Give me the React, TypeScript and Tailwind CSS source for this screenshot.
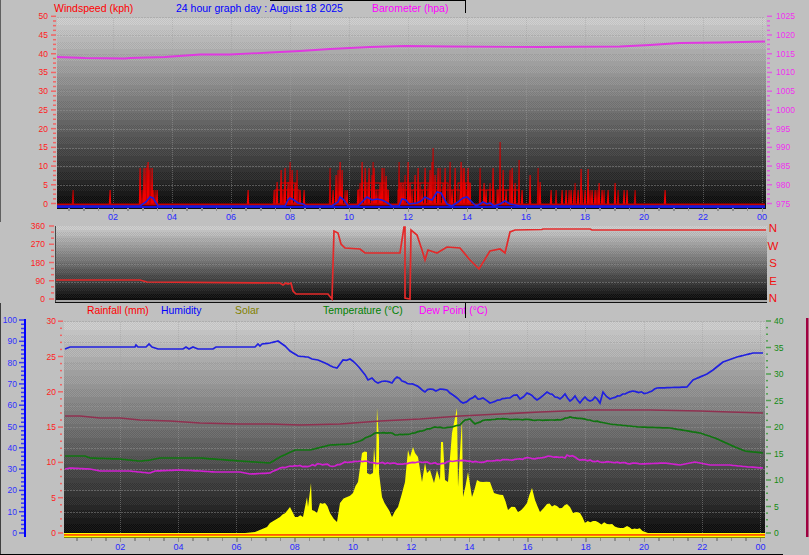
const font = { fontFamily: '"Liberation Sans", Arial, sans-serif' };

type Pt = [number, number];
const pts = (a: Pt[]) => a.map((p) => p.join(',')).join(' ');

// adds small pixel noise between the hand read points, the source data is jittery
const rough = (a: Pt[], from: number, to: number, amp: number): Pt[] => {
  const out: Pt[] = [];
  a.forEach((p, i) => {
    out.push(p);
    const next = a[i + 1];
    if (!next || next[0] - p[0] < 3) return;
    const n = Math.floor((next[0] - p[0]) / 2.5);
    for (let k = 1; k < n; k++) {
      const x = p[0] + ((next[0] - p[0]) * k) / n;
      const y = p[1] + ((next[1] - p[1]) * k) / n;
      const r = Math.sin(x * 12.9898) * 43758.5453;
      const noise = (r - Math.floor(r) - 0.5) * 2 * amp;
      out.push([+x.toFixed(1), +(x >= from && x <= to ? y + noise : y).toFixed(1)]);
    }
  });
  return out;
};

const barometer: Pt[] = [[57,57],[85,58],[125,58.5],[130,58],[165,57],[200,54.5],[230,54.5],[270,52.5],[300,51],[330,49],[370,47],[405,46],[450,46.5],[540,47],[620,46.5],[650,45],[680,43],[720,42.5],[765,41.5]];

const gusts: Pt[] = [[57,206],[140,206],[146,202],[150,197],[153,198],[158,206],[285,206],[288,200],[290,198],[294,200],[298,203],[303,204],[306,206],[332,206],[338,202],[340,197],[344,200],[348,206],[358,206],[363,201],[367,197],[372,200],[377,199],[382,200],[386,202],[392,206],[399,206],[402,199],[406,200],[409,204],[417,203],[421,201],[425,197],[429,199],[432,200],[437,192],[441,193],[447,204],[452,206],[458,202],[463,198],[467,197],[471,201],[476,206],[480,204],[483,202],[487,204],[490,203],[494,206],[500,204],[505,201],[510,204],[520,206],[765,206]];

const spikes: Pt[] = [[73,190],[110,190],[140,168],[142,190],[144,168],[146,168],[147,165],[148,162],[149,170],[150,168],[152,168],[153,190],[155,190],[157,190],[248,190],[274,190],[277,182],[281,170],[283,190],[285,168],[288,182],[290,162],[292,170],[295,183],[297,170],[300,190],[304,190],[330,168],[333,190],[336,175],[338,170],[340,162],[342,170],[345,190],[347,190],[358,190],[360,183],[362,162],[365,168],[367,183],[369,168],[372,175],[373,162],[374,168],[376,190],[378,190],[380,183],[382,168],[384,168],[386,176],[388,190],[399,162],[401,183],[403,183],[405,175],[408,162],[410,183],[412,190],[415,175],[418,168],[420,183],[422,190],[425,168],[428,183],[430,170],[432,162],[433,148],[435,175],[438,168],[440,168],[443,183],[445,168],[450,162],[452,190],[455,168],[460,190],[461,162],[462,183],[463,168],[464,168],[465,183],[466,190],[468,168],[470,183],[480,168],[484,183],[486,190],[490,183],[493,168],[498,190],[500,142],[503,170],[506,190],[510,170],[512,168],[515,183],[519,160],[522,190],[530,175],[538,168],[540,182],[551,190],[556,190],[562,190],[566,190],[569,190],[571,190],[574,190],[575,183],[578,190],[581,169],[582,190],[585,190],[588,169],[590,190],[592,190],[595,190],[597,190],[599,183],[602,190],[604,190],[608,190],[615,183],[618,190],[624,190],[627,190],[635,190],[665,190]];

const blocks: number[][] = [[275,299,190],[281,296,183],[358,388,190],[362,386,183],[398,470,190],[400,448,183],[458,470,183],[480,494,190],[497,519,190]];

const direction: Pt[] = [[56,280],[140,280],[147,282],[280,283],[283,285],[286,283],[288,284],[291,283],[293,291],[296,294],[328,294],[332,299],[334,231],[338,233],[341,244],[345,248],[360,249],[365,253],[400,253],[402,240],[404,227],[405,227],[405,298],[410,299],[411,230],[417,235],[422,250],[425,260],[428,250],[437,253],[447,247],[460,248],[470,260],[479,269],[490,251],[500,249],[505,253],[510,232],[515,230],[542,229.5],[543,229],[590,229],[592,230],[766,230]];

const humidity: Pt[] = [[65,349],[70,347],[135,347],[136,345],[138,347],[146,347],[149,344],[152,347],[158,349],[183,349],[186,347],[189,349],[193,347],[198,349],[213,349],[216,347],[255,347],[258,344],[260,346],[262,344],[270,343],[278,341],[285,346],[290,351],[298,356],[308,357],[312,359],[318,360],[325,363],[333,367],[337,368],[343,360],[350,359],[356,364],[362,371],[368,380],[372,378],[378,383],[385,381],[392,383],[397,377],[402,381],[410,384],[415,385],[420,388],[425,392],[430,389],[436,391],[440,389],[447,390],[453,395],[463,403],[470,399],[475,396],[478,399],[483,398],[490,403],[500,400],[510,398],[517,395],[520,399],[527,393],[537,400],[540,398],[547,392],[555,397],[560,399],[565,394],[570,401],[575,396],[580,403],[585,397],[590,401],[595,397],[600,403],[603,392],[610,399],[620,396],[633,391],[647,393],[657,388],[687,387],[693,380],[707,374],[713,370],[723,362],[737,357],[753,353],[763,353]];

const maroon: Pt[] = [[65,416],[80,416],[100,418],[120,418],[140,420],[170,421],[200,423],[240,424],[270,424],[300,425],[340,424],[380,421],[420,419],[460,416],[500,414],[540,412],[590,410],[650,410],[700,411],[730,412],[763,413]];

const temperature: Pt[] = [[65,456],[85,456],[90,458],[120,459],[140,461],[150,460],[160,458],[200,458],[240,461],[270,463],[280,457],[295,450],[310,450],[330,445],[350,444],[360,441],[375,433],[392,433],[395,435],[410,434],[425,430],[435,427],[445,428],[460,425],[465,420],[470,419],[475,424],[485,420],[500,419],[540,420],[560,420],[570,417],[590,420],[610,424],[640,427],[670,428],[700,433],[715,438],[735,447],[745,451],[763,453]];

const dewPoint: Pt[] = [[65,469],[70,468],[90,469],[100,471],[130,471],[140,472],[150,473],[155,471],[180,470],[200,471],[215,472],[240,472],[250,474],[270,473],[280,468],[290,466],[310,466],[320,464],[335,466],[345,462],[365,461],[380,463],[400,464],[420,462],[440,464],[450,461],[470,461],[478,462],[490,461],[510,460],[530,458],[540,458],[548,456],[565,458],[567,455],[575,457],[580,460],[590,460],[600,462],[620,463],[640,464],[665,463],[680,465],[695,462],[710,465],[730,465],[750,467],[763,468]];

const solar: Pt[] = [[235,534],[245,533],[255,532],[267,527],[270,523],[280,517],[290,507],[293,513],[295,517],[303,517],[307,497],[308,507],[311,483],[312,510],[317,513],[320,503],[325,503],[330,513],[337,522],[340,503],[347,497],[353,493],[358,482],[362,453],[367,452],[367,473],[373,473],[374,447],[376,470],[377,408],[379,440],[379,473],[382,497],[387,507],[392,517],[398,507],[405,482],[408,450],[410,457],[413,447],[415,453],[418,457],[422,482],[425,463],[427,473],[430,470],[434,483],[437,470],[440,480],[441,442],[443,442],[445,480],[448,482],[452,433],[454,423],[457,408],[458,487],[462,418],[463,497],[468,472],[472,497],[477,480],[483,482],[490,482],[494,493],[503,495],[508,510],[515,507],[518,512],[527,503],[532,488],[535,500],[540,512],[547,504],[557,506],[562,508],[567,504],[573,513],[580,513],[585,523],[593,521],[607,524],[620,528],[627,526],[637,529],[648,533],[655,534]];

const gray = (v: number) => {
  const c = Math.max(0, Math.min(255, Math.round(v)));
  return `rgb(${c},${c},${c})`;
};

function Plot({ id, x, y, w, h, bands }: { id: string; x: number; y: number; w: number; h: number; bands: number }) {
  const bh = h / bands;
  const level = (t: number) => 194 * Math.pow(1 - t, 0.95) + 6;
  return (
    <g>
      <defs>
        {Array.from({ length: bands }, (_, i) => (
          <pattern key={i} id={`${id}${i}`} width="2" height="2" patternUnits="userSpaceOnUse" x={x} y={y}>
            <rect width="1" height="1" fill={gray(level(i / bands) + 8)} />
            <rect x="1" y="1" width="1" height="1" fill={gray(level(i / bands) + 8)} />
          </pattern>
        ))}
      </defs>
      {Array.from({ length: bands }, (_, i) => (
        <g key={i}>
          <rect x={x} y={y + i * bh} width={w} height={bh + 0.5} fill={gray(level((i + 0.5) / bands))} shapeRendering="crispEdges" />
          <rect x={x} y={y + i * bh} width={w} height={bh * 0.6} fill={`url(#${id}${i})`} shapeRendering="crispEdges" />
        </g>
      ))}
    </g>
  );
}

function Hours({ x0, step, top, bottom, labelY }: { x0: number; step: number; top: number; bottom: number; labelY?: number }) {
  const labels = ['02', '04', '06', '08', '10', '12', '14', '16', '18', '20', '22', '00'];
  return (
    <g>
      {labels.map((l, i) => {
        const x = x0 + step * (i + 1);
        return (
          <g key={l}>
            <line x1={x} x2={x} y1={top} y2={bottom} stroke="#a0a0a0" strokeOpacity="0.45" strokeDasharray="1 1" shapeRendering="crispEdges" />
            {labelY && (
              <text x={x} y={labelY} textAnchor="middle" fontSize="9" fill="#2828ff">
                {l}
              </text>
            )}
          </g>
        );
      })}
    </g>
  );
}

function BottomTicks({ x0, step, y }: { x0: number; step: number; y: number }) {
  return (
    <g>
      {Array.from({ length: 48 }, (_, i) => (
        <rect key={i} x={x0 + (step * (i + 1)) / 2 - 0.5} y={y} width="1.5" height={(i + 1) % 4 === 0 ? 4 : 3} fill="#8f8f8f" shapeRendering="crispEdges" />
      ))}
    </g>
  );
}

function HGrid({ x1, x2, ys }: { x1: number; x2: number; ys: number[] }) {
  return (
    <g>
      {ys.map((y) => (
        <line key={y} x1={x1} x2={x2} y1={y} y2={y} stroke="#989898" strokeOpacity="0.45" strokeDasharray="2 1" shapeRendering="crispEdges" />
      ))}
    </g>
  );
}

function Axis({
  values,
  y0,
  dy,
  minor,
  labelX,
  anchor,
  tickX,
  tickW,
  minorX,
  minorW,
  text,
  tick,
}: {
  values: number[];
  y0: number;
  dy: number;
  minor: number;
  labelX: number;
  anchor: 'start' | 'end';
  tickX: number;
  tickW: number;
  minorX: number;
  minorW: number;
  text: string;
  tick: string;
}) {
  const count = (values.length - 1) * minor;
  return (
    <g>
      {Array.from({ length: count + 1 }, (_, i) => {
        const y = y0 - (dy * i) / minor;
        return i % minor === 0 ? (
          <rect key={i} x={tickX} y={y - 0.75} width={tickW} height="1.5" fill={tick} />
        ) : (
          <rect key={i} x={minorX} y={y - 0.75} width={minorW} height="1.5" fill={tick} />
        );
      })}
      {values.map((v, i) => (
        <text key={v} x={labelX} y={y0 - dy * i + 3} textAnchor={anchor} fontSize="8.5" fill={text}>
          {v}
        </text>
      ))}
    </g>
  );
}

function WindChart() {
  const ys = Array.from({ length: 10 }, (_, i) => 185.5 - 18.72 * i);
  return (
    <svg className="block overflow-visible" width="809" height="208" viewBox="0 14 809 208" style={font}>
      <Plot id="a" x={57} y={18} w={708.5} h={190} bands={16} />
      <HGrid x1={57} x2={765} ys={ys} />
      <Hours x0={54} step={59} top={18} bottom={205} labelY={220} />
      <BottomTicks x0={54} step={29.5} y={208} />
      <Axis values={[0, 5, 10, 15, 20, 25, 30, 35, 40, 45, 50]} y0={203.5} dy={18.72} minor={4} labelX={48} anchor="end" tickX={51} tickW={5} minorX={53} minorW={3} text="#ff1c1c" tick="#f06464" />
      <Axis values={[975, 980, 985, 990, 995, 1000, 1005, 1010, 1015, 1020, 1025]} y0={203.5} dy={18.72} minor={4} labelX={776} anchor="start" tickX={767} tickW={5} minorX={767} minorW={3} text="#f030f0" tick="#e060e0" />
      {spikes.map(([x, top], i) => (
        <polygon key={i} points={`${x - 1.2},204 ${x - 0.4},${top} ${x + 0.6},${top} ${x + 1.2},204`} fill={i % 3 === 0 ? '#c40000' : '#f00000'} />
      ))}
      {blocks.map(([a, b, y], i) => (
        <rect key={i} x={a} y={y} width={b - a} height={204 - y} fill="none" stroke="#e00000" strokeWidth="1" />
      ))}
      <rect x={57} y={203.5} width={708} height={2} fill="#c80000" />
      <rect x={57} y={206} width={708} height={2} fill="#1414d8" />
      <polyline points={pts(gusts)} fill="none" stroke="#1c1ce0" strokeWidth="1.6" />
      <polyline points={pts(barometer)} fill="none" stroke="#e038e0" strokeWidth="1.8" />
    </svg>
  );
}

function DirectionChart() {
  return (
    <svg className="block overflow-visible" width="809" height="81" viewBox="0 222 809 81" style={font}>
      <Plot id="b" x={56} y={226} w={710.5} h={74} bands={12} />
      <HGrid x1={56} x2={766} ys={[245, 264, 282]} />
      <rect x={56} y={300} width={711} height={2} fill="#a8a8a8" />
      <rect x={55} y={302} width={712} height={1} fill="#101010" />
      <rect x={55} y={226} width={1} height={76} fill="#484848" />
      <Axis values={[0, 90, 180, 270, 360]} y0={299} dy={18.25} minor={3} labelX={45} anchor="end" tickX={49} tickW={5} minorX={51} minorW={3} text="#ff1c1c" tick="#f06464" />
      {['N', 'W', 'S', 'E', 'N'].map((l, i) => (
        <text key={i} x={773} y={232 + i * 17.6} textAnchor="middle" fontSize="11.5" fill="#f01010">
          {l}
        </text>
      ))}
      <polyline points={pts(direction)} fill="none" stroke="#e42a2a" strokeWidth="1.7" />
    </svg>
  );
}

function WeatherChart() {
  const ys = Array.from({ length: 10 }, (_, i) => 512 - 21.2 * i);
  return (
    <svg className="block overflow-visible" width="809" height="237" viewBox="0 318 809 237" style={font}>
      <Plot id="c" x={64} y={322} w={701} h={215} bands={16} />
      <HGrid x1={64} x2={765} ys={ys} />
      <Hours x0={62} step={29.1 * 2} top={322} bottom={534} labelY={550} />
      <BottomTicks x0={62} step={29.1} y={538} />
      <rect x={24} y={319} width={2} height={218} fill="#0000ff" />
      <Axis values={[0, 10, 20, 30, 40, 50, 60, 70, 80, 90, 100]} y0={533} dy={21.3} minor={5} labelX={17} anchor="end" tickX={19} tickW={5} minorX={21} minorW={3} text="#3030ff" tick="#3c3cf0" />
      <Axis values={[0, 5, 10, 15, 20, 25, 30]} y0={533} dy={35.3} minor={5} labelX={56} anchor="end" tickX={58} tickW={5} minorX={60} minorW={2} text="#ff1c1c" tick="#f06464" />
      <Axis values={[0, 5, 10, 15, 20, 25, 30, 35, 40]} y0={533} dy={26.5} minor={4} labelX={774} anchor="start" tickX={766} tickW={5} minorX={766} minorW={2} text="#108a10" tick="#50a050" />
      <rect x={806} y={318} width={2.5} height={219} fill="#a00040" />
      <polygon points={pts(rough(solar, 285, 640, 1.8))} fill="#ffff00" />
      <rect x={64} y={533} width={701} height={4.5} fill="#ffff00" />
      <rect x={64} y={534} width={701} height={1.8} fill="#ff5a00" />
      <polyline points={pts(maroon)} fill="none" stroke="#903050" strokeWidth="1.7" />
      <polyline points={pts(rough(temperature, 360, 600, 0.5))} fill="none" stroke="#107410" strokeWidth="1.7" />
      <polyline points={pts(rough(dewPoint, 270, 640, 0.9))} fill="none" stroke="#d020d0" strokeWidth="1.7" />
      <polyline points={pts(rough(humidity, 345, 660, 1.1))} fill="none" stroke="#2020e0" strokeWidth="1.7" />
    </svg>
  );
}

export default function App() {
  return (
    <div className="relative h-[555px] w-[809px] overflow-hidden bg-[#c0c0c0]" style={font}>
      {/* Wind speed and barometer */}
      <div className="flex h-[14px] items-start overflow-hidden pl-[54px] pt-[1px] text-[10.5px] leading-[14px]">
        <span className="w-[122px] text-[#ff0000]">Windspeed (kph)</span>
        <span className="w-[196px] text-[#0000ff]">24 hour graph day : August 18 2025</span>
        <span className="text-[#ff00ff]">Barometer (hpa)</span>
      </div>
      <WindChart />

      {/* Wind direction */}
      <DirectionChart />

      {/* Rain, humidity, solar, temperature, dew point */}
      <div className="flex h-[15px] items-center pl-[87px] text-[10.4px]">
        <span className="w-[74px] text-[#ff0000]">Rainfall (mm)</span>
        <span className="w-[74px] text-[#0000ff]">Humidity</span>
        <span className="w-[88px] text-[#808000]">Solar</span>
        <span className="w-[96px] text-[#008000]">Temperature (°C)</span>
        <span className="text-[#ff00ff]">Dew Point (°C)</span>
      </div>
      <WeatherChart />

      {/* Leftover frame lines over the charts */}
      <div className="absolute left-0 top-0 h-[222px] w-px bg-[#606060]" />
      <div className="absolute left-0 top-[303px] h-[252px] w-px bg-[#404040]" />
      <div className="absolute left-[270px] top-0 h-px w-[196px] bg-black" />
      <div className="absolute left-[465px] top-0 h-[13px] w-px bg-black" />
      <div className="absolute left-[465px] top-[303px] h-[15px] w-px bg-black" />
      <div className="absolute bottom-0 left-0 h-px w-[783px] bg-black" />
    </div>
  );
}
